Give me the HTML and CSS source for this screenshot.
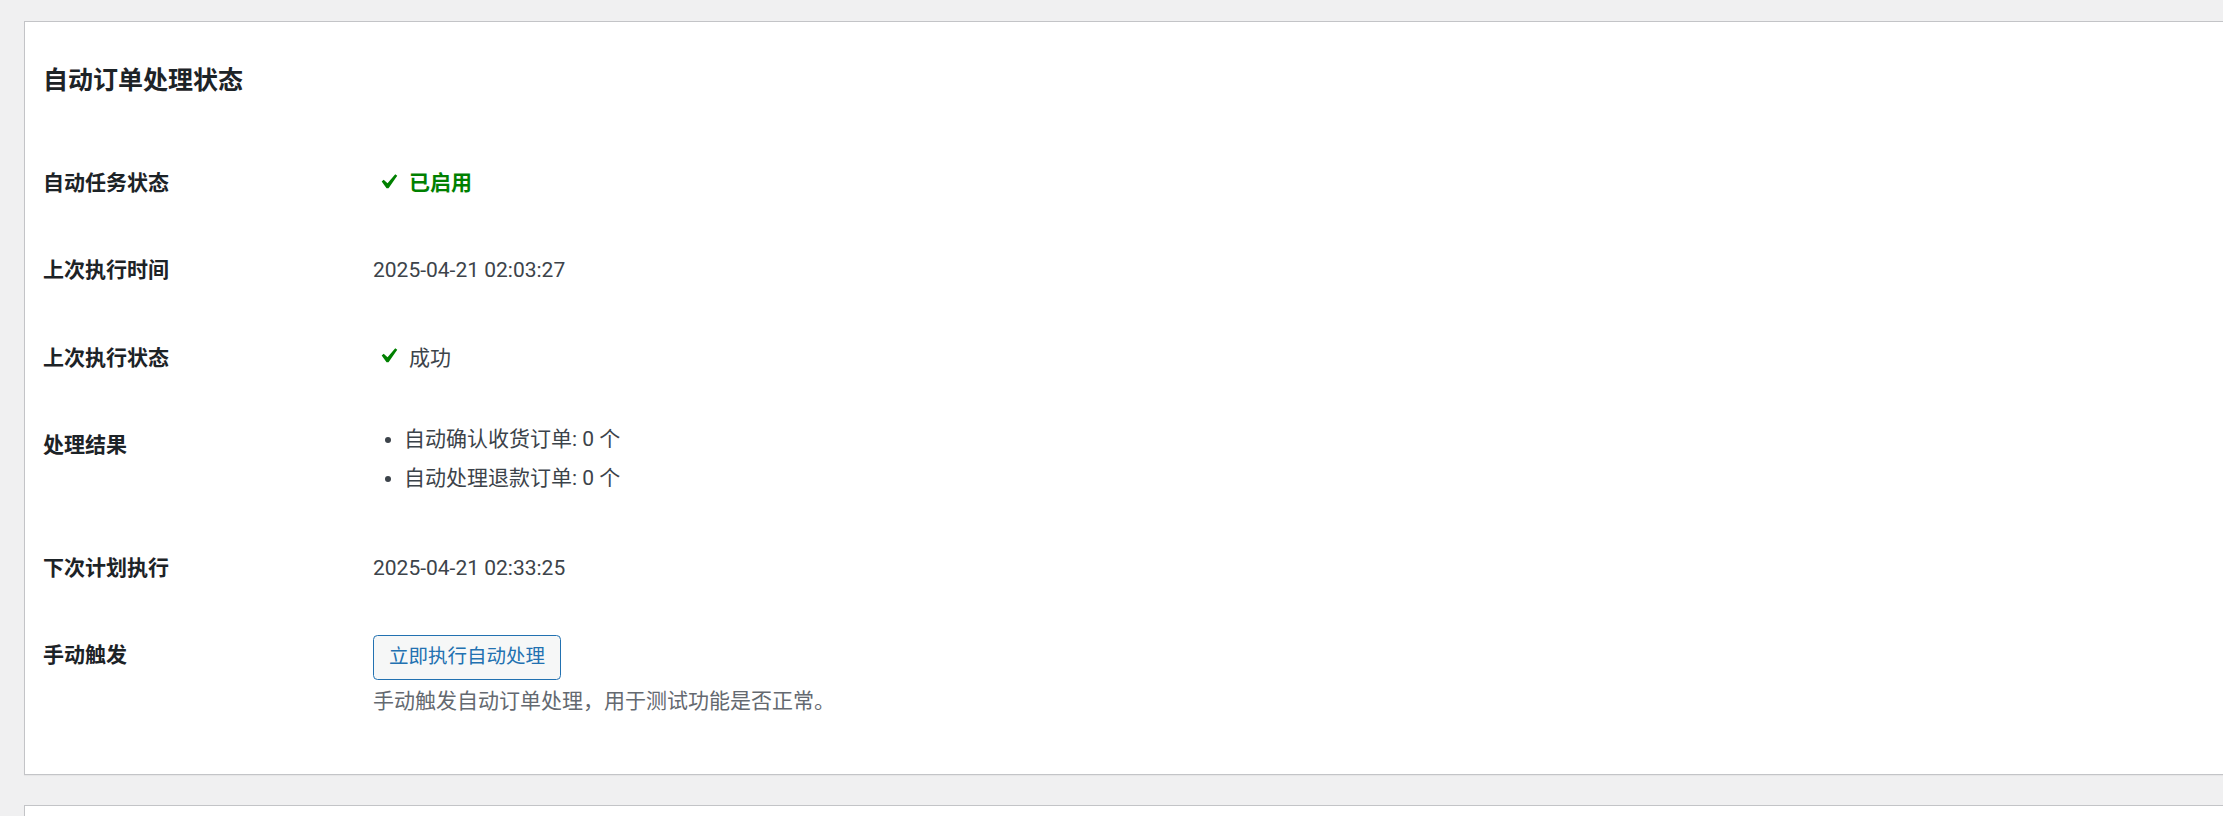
FILE: index.html
```html
<!DOCTYPE html>
<html lang="zh-CN">

<head>
    <meta charset="UTF-8">
    <meta name="viewport" content="width=device-width, initial-scale=1.0">
    <title>自动订单处理状态</title>
    <link rel="stylesheet" href="styles.css">
</head>

<body>
    <div class="wrap">
        <div class="card">
            <h2 class="card-title">自动订单处理状态</h2>
            <table class="form-table">
                <tbody>
                    <tr>
                        <th>自动任务状态</th>
                        <td>
                            <span class="status status-on">
                                <svg class="dashicon" viewBox="0 0 20 20"><path d="M14.83 4.89l1.34.94-5.81 8.38H9.02L5.78 9.67l1.34-1.25 2.57 2.4z"/></svg>
                                已启用
                            </span>
                        </td>
                    </tr>
                    <tr>
                        <th>上次执行时间</th>
                        <td>2025-04-21 02:03:27</td>
                    </tr>
                    <tr>
                        <th>上次执行状态</th>
                        <td>
                            <span class="status">
                                <svg class="dashicon" viewBox="0 0 20 20"><path d="M14.83 4.89l1.34.94-5.81 8.38H9.02L5.78 9.67l1.34-1.25 2.57 2.4z"/></svg>
                                成功
                            </span>
                        </td>
                    </tr>
                    <tr>
                        <th>处理结果</th>
                        <td>
                            <ul class="result-list">
                                <li>自动确认收货订单: 0 个</li>
                                <li>自动处理退款订单: 0 个</li>
                            </ul>
                        </td>
                    </tr>
                    <tr>
                        <th>下次计划执行</th>
                        <td>2025-04-21 02:33:25</td>
                    </tr>
                    <tr>
                        <th>手动触发</th>
                        <td>
                            <button class="button" id="run-now">立即执行自动处理</button>
                            <p class="description">手动触发自动订单处理，用于测试功能是否正常。</p>
                        </td>
                    </tr>
                </tbody>
            </table>
        </div>
        <div class="card card-next"></div>
    </div>
</body>

</html>
```

FILE: styles.css
```css
body {
    margin: 0;
    background-color: #f0f0f1;
    color: #3c434a;
    font-family: Roboto, "Noto Sans CJK SC", sans-serif;
    font-size: 19.5px;
    line-height: 1.4;
    overflow: hidden;
}

.wrap {
    padding: 21px 0 0 24px;
}

.card {
    background: #ffffff;
    border: 1px solid #c3c4c7;
    box-shadow: 0 1px 1px rgba(0, 0, 0, 0.04);
    margin-right: -20px;
    padding: 18px 18px 34px;
}

.card-next {
    margin-top: 30px;
    height: 200px;
    padding: 0;
}

.card-title {
    color: #1d2327;
    font-size: 25px;
    font-weight: 700;
    line-height: 33px;
    margin: 24px 0 43px;
}

.form-table {
    width: 100%;
    border-collapse: collapse;
}

.form-table th {
    width: 300px;
    padding: 30px 15px 30px 0;
    text-align: left;
    vertical-align: top;
    color: #1d2327;
    font-size: 21px;
    font-weight: 700;
    line-height: 27.3px;
}

.form-table td {
    padding: 22.5px 15px;
    vertical-align: middle;
    font-size: 21px;
    line-height: 27.3px;
}

.status {
    display: flex;
    align-items: center;
}

.status-on {
    color: #008000;
    font-weight: 700;
}

.dashicon {
    width: 30px;
    height: 30px;
    fill: #008000;
    margin: 0 6px 4px 0;
    flex-shrink: 0;
}

.result-list {
    list-style: disc;
    margin: 0;
    padding-left: 31px;
}

.result-list li {
    line-height: 30px;
    margin-bottom: 9px;
}

.button {
    display: inline-block;
    height: 45px;
    padding: 0 15px;
    border: 1px solid #2271b1;
    border-radius: 4.5px;
    background: #f6f7f7;
    color: #2271b1;
    font-family: Roboto, "Noto Sans CJK SC", sans-serif;
    font-size: 19.5px;
    line-height: 42px;
    cursor: pointer;
}

.description {
    margin: 6px 0 0;
    color: #646970;
    font-size: 21px;
    line-height: 31.5px;
}
```
